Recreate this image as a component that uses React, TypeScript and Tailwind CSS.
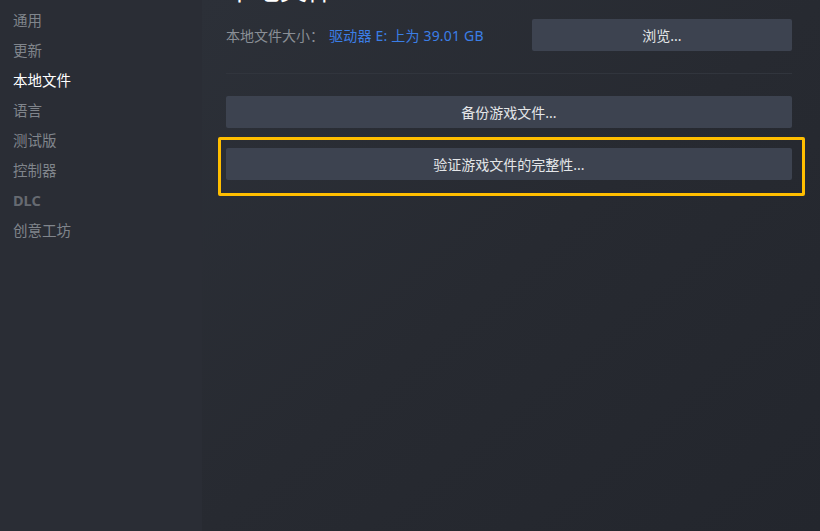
import React from 'react';

const navItems = [
  { label: '通用', active: false },
  { label: '更新', active: false },
  { label: '本地文件', active: true },
  { label: '语言', active: false },
  { label: '测试版', active: false },
  { label: '控制器', active: false },
  { label: 'DLC', active: false, latin: true },
  { label: '创意工坊', active: false },
];

const font = { fontFamily: '"Noto Sans", "Noto Sans CJK SC", sans-serif' };

export default function App() {
  return (
    <div className="flex h-[531px] w-[820px] overflow-hidden bg-[#25282f] text-[#dfe1e3]" style={font}>
      {/* sidebar */}
      <div className="w-[202px] shrink-0 bg-[#2a2d35] pt-[5px]">
        {navItems.map((item) => (
          <div
            key={item.label}
            className={
              'h-[30px] pl-[13px] text-[14.5px] leading-[30px] ' +
              (item.active
                ? 'text-white'
                : item.latin
                ? 'font-bold text-[#666a71]'
                : 'text-[#80858c]')
            }
          >
            {item.label}
          </div>
        ))}
      </div>

      {/* content */}
      <div className="flex-1 bg-gradient-to-br from-[#2c3038] via-[#272a31] to-[#23262d] pl-[24px] pr-[28px]">
        <div className="mt-[-25px] h-[30px] text-[27px] leading-[30px] text-white">本地文件</div>

        <div className="mt-[14px] flex h-[32px] items-center justify-between">
          <div className="text-[14px]">
            <span className="text-[#8a8f96]">本地文件大小：</span>
            <span className="ml-[5px] tracking-[0.2px] text-[#3b7ee6]">驱动器 E: 上为 39.01 GB</span>
          </div>
          <button className="h-[32px] w-[260px] rounded-[2px] bg-[#3d4350] text-[14px] text-[#e4e6e8]">
            浏览...
          </button>
        </div>

        <div className="mt-[22px] h-px bg-[#31353d]" />

        <button className="mt-[22px] block h-[32px] w-full rounded-[2px] bg-[#3d4350] text-[14px] text-[#e4e6e8]">
          备份游戏文件...
        </button>

        <div className="mt-[9px] -ml-[8px] -mr-[13px] rounded-[2px] border-[3px] border-[#ffbe00] pb-[13px] pl-[5px] pr-[10px] pt-[8px]">
          <button className="block h-[32px] w-full rounded-[2px] bg-[#3d4350] text-[14px] text-[#e4e6e8]">
            验证游戏文件的完整性...
          </button>
        </div>
      </div>
    </div>
  );
}
